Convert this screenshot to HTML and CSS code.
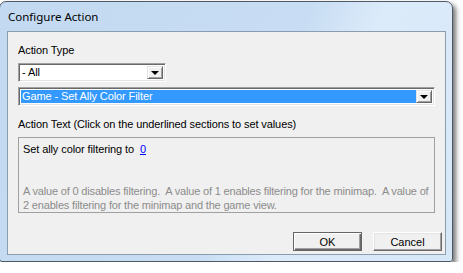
FILE: index.html
```html
<!DOCTYPE html>
<html lang="en">

<head>
    <meta charset="UTF-8">
    <title>Configure Action</title>
    <link rel="stylesheet" href="styles.css">
</head>

<body>
    <div class="dialog">
        <div class="title-bar">Configure Action</div>

        <div class="client">
            <div class="field-label">Action Type</div>
            <div class="combo combo-short">
                <div class="combo-text">- All</div>
                <div class="combo-button"><span class="arrow"></span></div>
            </div>
            <div class="combo combo-wide">
                <div class="combo-text selected">Game - Set Ally Color Filter</div>
                <div class="combo-button"><span class="arrow"></span></div>
            </div>

            <div class="field-label action-label">Action Text (Click on the underlined sections to set values)</div>
            <div class="action-box">
                <div class="action-text">Set ally color filtering to&nbsp; <a class="value-link">0</a></div>
                <div class="action-desc">A value of 0 disables filtering.&nbsp; A value of 1 enables filtering for the minimap.&nbsp; A value of<br>2 enables filtering for the minimap and the game view.</div>
            </div>

            <div class="button-row">
                <button class="btn btn-default">OK</button>
                <button class="btn">Cancel</button>
            </div>
        </div>
    </div>
</body>

</html>
```

FILE: styles.css
```css
body {
    margin: 0;
    background: #ffffff;
    font-family: "Liberation Sans", Arial, sans-serif;
    font-size: 11px;
    line-height: 13px;
    letter-spacing: -0.1px;
    color: #000000;
}

.dialog {
    display: flex;
    flex-direction: column;
    width: 454px;
    height: 261px;
    margin: 1px 0 0 -1px;
    box-sizing: border-box;
    border: 1px solid #4e5965;
    border-radius: 7px 7px 3px 3px;
    background: linear-gradient(115deg, #c2d9f1 0%, #c8ddf3 55%, #dcebfa 68%, #d6e7f8 100%);
    box-shadow: 3px 3px 5px rgba(0, 0, 0, 0.55);
}

.title-bar {
    height: 29px;
    padding-left: 8px;
    font-family: "Noto Sans", "Open Sans", sans-serif;
    font-size: 11.5px;
    line-height: 29px;
    letter-spacing: 0;
    color: #000000;
}

.client {
    display: flex;
    flex-direction: column;
    flex: 1;
    margin: 0 6px 6px 7px;
    padding: 12px 10px 0 10px;
    background: #f0f0f0;
    border: 1px solid #8a9cae;
}

.combo {
    display: flex;
    height: 19px;
    box-sizing: border-box;
    background: #ffffff;
    border-style: solid;
    border-width: 1px;
    border-color: #a0a0a0 #ffffff #ffffff #a0a0a0;
    box-shadow: inset 1px 1px 0 #696969, inset -1px -1px 0 #e3e3e3;
    padding: 2px 2px 2px 2px;
}

.combo-short {
    width: 148px;
    margin-top: 6px;
}

.combo-wide {
    width: 417px;
    margin-top: 5px;
}

.combo-text {
    flex: 1;
    padding-left: 1px;
    line-height: 13px;
}

.combo-text.selected {
    background: #3399ff;
    color: #ffffff;
}

.combo-button {
    display: flex;
    justify-content: center;
    align-items: center;
    width: 16px;
    box-sizing: border-box;
    background: #f0f0f0;
    border-style: solid;
    border-width: 1px;
    border-color: #e3e3e3 #696969 #696969 #e3e3e3;
    box-shadow: inset 1px 1px 0 #ffffff, inset -1px -1px 0 #a0a0a0;
}

.arrow {
    width: 0;
    height: 0;
    border-left: 4px solid transparent;
    border-right: 4px solid transparent;
    border-top: 4px solid #000000;
    margin-top: 1px;
}

.action-label {
    margin-top: 12px;
}

.action-box {
    display: flex;
    flex-direction: column;
    justify-content: space-between;
    height: 76px;
    margin-top: 6px;
    width: 417px;
    box-sizing: border-box;
    border: 1px solid #a0a0a0;
    padding: 5px 4px 0 4px;
}

.value-link {
    color: #0000ff;
    text-decoration: underline;
}

.action-desc {
    color: #8c8c8c;
    line-height: 14px;
    letter-spacing: -0.17px;
    white-space: nowrap;
}

.button-row {
    display: flex;
    justify-content: flex-end;
    gap: 11px;
    margin-top: 19px;
    margin-right: -7px;
}

.btn {
    width: 69px;
    height: 19px;
    padding: 0;
    font-family: "Liberation Sans", Arial, sans-serif;
    font-size: 11px;
    color: #000000;
    background: #f0f0f0;
    border-style: solid;
    border-width: 1px;
    border-color: #ffffff #696969 #696969 #ffffff;
    box-shadow: inset -1px -1px 0 #a0a0a0, inset 1px 1px 0 #e3e3e3;
}

.btn-default {
    border: 1px solid #646464;
    box-shadow: inset 1px 1px 0 #ffffff, inset -1px -1px 0 #696969, inset -2px -2px 0 #a0a0a0;
}
```
